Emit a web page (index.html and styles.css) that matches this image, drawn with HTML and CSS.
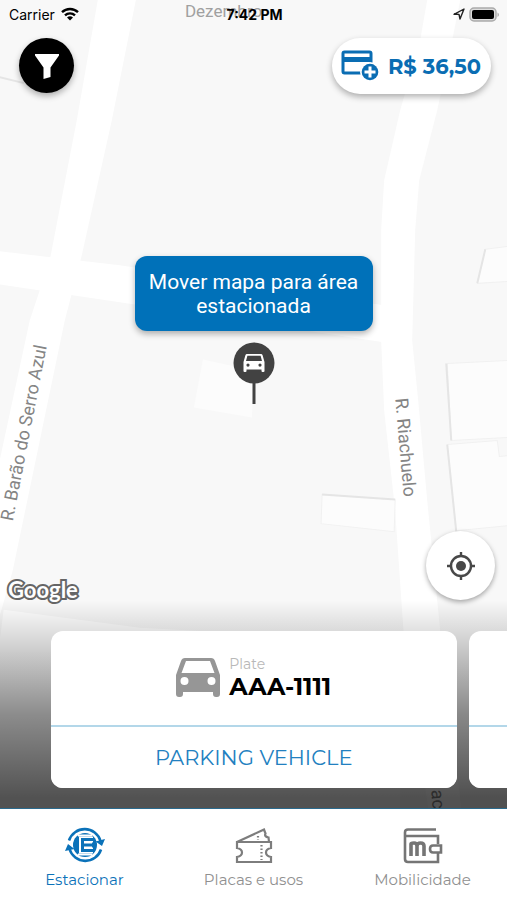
FILE: index.html
```
<!DOCTYPE html>
<html lang="pt-BR">
<head>
  <meta charset="UTF-8">
  <meta name="viewport" content="width=device-width, initial-scale=1.0">
  <title>Estacionar</title>
  <link rel="stylesheet" href="styles.css">
</head>
<body>
  <div class="app">
    <main class="screen">
      <svg class="map" viewBox="0 0 507 807" preserveAspectRatio="xMidYMid slice">
        <rect width="507" height="807" fill="#f8f8f8"/>
        <!-- roads -->
        <g fill="#fff">
          <path d="M98 0h38L112 120 82 255l-17 65-52 250-13 45V460L30 320l20-60 27-140z"/>
          <path d="M0 251l120 14 265 40v37l-265-40L0 284z"/>
          <path d="M427 0h33l-8 40-15 70-18 70-4 50-3 110 6 60 9 100 10 100 4 40 20 167h-33l-24-167-9-130-11-100-3-70v-110l3-50 16-70 20-70z"/>
          <path d="M4 609l136 18 260 14v166H0V640z"/>
        </g>
        <!-- buildings -->
        <g fill="#fcfcfc" stroke="#f1f1f1">
          <path d="M485 249l23-3v35l-31 2z"/>
          <path d="M508 360l-61 3 4 77 57-3z"/>
          <path d="M447 444l50-4 2 16 9-1v70l-52 5z"/>
          <path d="M322 494l73 5-1 32-73-8z"/>
        </g>
        <path d="M203 359l50 11-1 47-58-10z" fill="#fcfcfc"/>
        <g fill="none" stroke="#e5e5e5" stroke-width="2">
          <path d="M0 77l24 6M446 363l5 77M447 444l9 87M322 494l73 5M485 249l-8 34"/>
        </g>
        <g class="map-labels">
          <text class="faded" x="185" y="17">Dezembro</text>
          <text transform="translate(13 521) rotate(-79)">R. Barão do Serro Azul</text>
          <text transform="translate(395 398) rotate(85)">R. Riachuelo</text>
          <text transform="translate(431 789) rotate(86)">achuelo</text>
        </g>
      </svg>

      <div class="status-bar">
        <div class="carrier">
          <span>Carrier</span>
          <svg width="18" height="14" viewBox="0 0 18 14">
            <g fill="none" stroke="#000" stroke-width="2.4">
              <path d="M1 5.2a11.6 11.6 0 0 1 16 0M4 8.4a7.2 7.2 0 0 1 10 0"/>
            </g>
            <path d="M6 10.6a4.4 4.4 0 0 1 6 0l-3 3z"/>
          </svg>
        </div>
        <span class="time">7:42 PM</span>
        <div class="status-icons">
          <svg width="12" height="12" viewBox="0 0 12 12">
            <path d="M1 6.3L11 1 7 11 6 6.4z" fill="none" stroke="#222" stroke-width="1.4" stroke-linejoin="round"/>
          </svg>
          <svg width="31" height="15" viewBox="0 0 31 15">
            <rect x="1" y="1" width="26" height="13" rx="4" fill="#ddd" stroke="#aaa" stroke-width="1.5"/>
            <rect x="3" y="3" width="22" height="9" rx="2"/>
            <path d="M28.5 5.5V10q1.5-.8 1.5-2.2t-1.5-2.3z" fill="#aaa"/>
          </svg>
        </div>
      </div>

      <div class="top-bar">
        <button class="filter" aria-label="Filtrar">
          <svg width="26" height="26" viewBox="0 0 26 26">
            <path d="M1 1h24v1.5l-8.5 12V24l-7 2V14.5L1 2.5z" fill="#fff"/>
          </svg>
        </button>
        <button class="balance">
          <svg width="38" height="32" viewBox="0 0 38 32">
            <rect x="2" y="2" width="28" height="21" rx="1.5" fill="none" stroke="#0a6db3" stroke-width="3"/>
            <path d="M2 7h28v5H2z" fill="#0a6db3"/>
            <circle cx="29" cy="22" r="10" fill="#fff"/>
            <circle cx="29" cy="22" r="8.3" fill="#0a6db3"/>
            <path d="M29 16.5v11M23.5 22h11" stroke="#fff" stroke-width="3"/>
          </svg>
          <span>R$ 36,50</span>
        </button>
      </div>

      <div class="marker">
        <button class="callout">Mover mapa para área estacionada</button>
        <svg width="42" height="62" viewBox="0 0 42 62">
          <path d="M21 38v24" stroke="#424242" stroke-width="3"/>
          <circle cx="21" cy="21" r="20.5" fill="#424242"/>
          <path d="M14 12h14q1.2 0 1.6 1.2L31.5 20v9q0 1-1 1h-1q-1 0-1-1v-1.5h-15V29q0 1-1 1h-1q-1 0-1-1v-9l1.9-6.8Q12.8 12 14 12zm.4 1.8L13 19h16l-1.4-5.2zM15 21.5a1.6 1.6 0 1 0 0 3.2 1.6 1.6 0 0 0 0-3.2zm12 0a1.6 1.6 0 1 0 0 3.2 1.6 1.6 0 0 0 0-3.2z" fill="#fff"/>
        </svg>
      </div>

      <div class="map-tools">
        <span class="google">Google</span>
        <button class="locate" aria-label="Minha localização">
          <svg width="28" height="28" viewBox="0 0 28 28">
            <circle cx="14" cy="14" r="10" fill="none" stroke="#484848" stroke-width="2.4"/>
            <circle cx="14" cy="14" r="5" fill="#484848"/>
            <path d="M14 0v5M14 23v5M0 14h5M23 14h5" stroke="#484848" stroke-width="2.4"/>
          </svg>
        </button>
      </div>

      <div class="cards">
        <article class="card">
          <div class="vehicle">
            <svg width="44" height="40" viewBox="0 0 44 40">
              <path d="M9 0h26q3 0 4 3l5 14v19q0 3-3 3h-1q-3 0-3-3v-2H7v2q0 3-3 3H3q-3 0-3-3V17L5 3q1-3 4-3zm1 3L5.5 15h33L34 3zM8.5 19a4 4 0 1 0 0 8 4 4 0 0 0 0-8zm27 0a4 4 0 1 0 0 8 4 4 0 0 0 0-8z" fill="#969696"/>
            </svg>
            <div>
              <p class="plate-label">Plate</p>
              <p class="plate">AAA-1111</p>
            </div>
          </div>
          <button class="park">PARKING VEHICLE</button>
        </article>
        <article class="card">
          <div class="vehicle"></div>
          <div class="park"></div>
        </article>
      </div>
    </main>

    <nav class="tabs">
      <a class="tab active" href="#estacionar">
        <svg width="40" height="38" viewBox="0 0 40 38">
          <g fill="none" stroke="currentColor" stroke-width="2.6">
            <path d="M4 14.5A16.5 16.5 0 0 1 35.5 15"/>
            <path d="M36 23.5A16.5 16.5 0 0 1 4.5 23"/>
          </g>
          <path d="M30.5 15.5L40 13l-3 7zM0 25l3-7 6.5 5z" fill="currentColor"/>
          <circle cx="20" cy="19" r="12" fill="currentColor"/>
          <g fill="none">
            <path d="M13 9.5h14M13 28.5h14" stroke="#fff" stroke-width="2"/>
            <path d="M28 13.5H17v11h11M17 19h10" stroke="#fff" stroke-width="6"/>
            <path d="M29 13.5H17.500v11H29M17.500 19H29" stroke="currentColor" stroke-width="3"/>
          </g>
        </svg>
        <span>Estacionar</span>
      </a>
      <a class="tab" href="#placas">
        <svg width="40" height="38" viewBox="0 0 40 38">
          <g fill="none" stroke="#7d7d7d" stroke-width="2.2">
            <path d="M3 16h34v6q-5 1-5 4.5t5 4.5v5H3v-5q5-1 5-4.5T3 22z"/>
            <path d="M3 16L30 3.5l1.5 4q-1.5 3 3 4L35 16"/>
            <path d="M27.5 19v15M24 10v4" stroke-dasharray="1.5 2"/>
          </g>
        </svg>
        <span>Placas e usos</span>
      </a>
      <a class="tab" href="#mobilicidade">
        <svg width="40" height="38" viewBox="0 0 40 38">
          <g fill="none" stroke="#757575" stroke-width="2.6">
            <path d="M33 3.5H5q-3 0-3 3V33q0 3 3 3h30v-9M35 18v-8H3"/>
            <path d="M38 19.5h-8q-3 0-3 3.5t3 3.5h8z"/>
          </g>
          <path d="M8 30V18q0-1 3-1t3 3v10M14 20q0-3 3.5-3t3.5 3v10" fill="none" stroke="#757575" stroke-width="3.6"/>
        </svg>
        <span>Mobilicidade</span>
      </a>
    </nav>
  </div>
</body>
</html>
```
FILE: styles.css
```
* {
  box-sizing: border-box;
  margin: 0;
  padding: 0;
}
body {
  font-family: Montserrat, Inter, sans-serif;
  color: #000;
}
button {
  border: 0;
  font: inherit;
  cursor: pointer;
}
svg {
  display: block;
  flex-shrink: 0;
}
.app {
  display: flex;
  flex-direction: column;
  min-height: 100vh;
}
.screen {
  position: relative;
  display: flex;
  flex-direction: column;
  flex: 1;
  overflow: hidden;
}

/* map behind everything */
.map {
  position: absolute;
  width: 100%;
  height: 100%;
  z-index: -1;
}
.map-labels {
  font-family: Roboto, sans-serif;
  font-size: 18px;
  fill: #858585;
}
.map-labels .faded {
  font-size: 17px;
  fill: #a0a0a0;
}

.status-bar {
  display: grid;
  grid-template-columns: 1fr auto 1fr;
  align-items: center;
  height: 28px;
  padding: 0 7px 0 9px;
  font-family: Inter, sans-serif;
  font-size: 14px;
}
.carrier, .status-icons {
  display: flex;
  align-items: center;
  gap: 6px;
}
.status-icons {
  justify-content: flex-end;
  gap: 4px;
}
.time {
  font-weight: 700;
}

.top-bar {
  display: flex;
  justify-content: space-between;
  padding: 10px 16px 0 19px;
}
.filter, .locate {
  display: flex;
  align-items: center;
  justify-content: center;
  border-radius: 50%;
}
.filter {
  width: 55px;
  height: 55px;
  background: #000;
  box-shadow: 0 3px 6px rgba(0, 0, 0, .3);
}
.balance {
  display: flex;
  align-items: center;
  gap: 9px;
  height: 56px;
  padding: 0 10px 0 9px;
  border-radius: 28px;
  background: #fff;
  color: #0a6db3;
  font-size: 21px;
  font-weight: 700;
  white-space: nowrap;
  box-shadow: 0 3px 6px rgba(0, 0, 0, .3);
}

/* the tip of the pin stays on the centre of the map */
.marker {
  position: absolute;
  left: 50%;
  bottom: 50%;
  transform: translateX(-50%);
  display: flex;
  flex-direction: column;
  align-items: center;
  gap: 11px;
}
.callout {
  width: 238px;
  padding: 14px 10px 13px;
  border-radius: 12px;
  background: #0071b9;
  color: #fff;
  font-family: Roboto, sans-serif;
  font-size: 21px;
  line-height: 24px;
  box-shadow: 0 3px 6px rgba(0, 0, 0, .3);
}

.map-tools {
  display: flex;
  align-items: flex-end;
  justify-content: space-between;
  margin-top: auto;
  padding: 0 12px 0 8px;
}
.google {
  font-family: Lato, sans-serif;
  font-size: 22px;
  font-weight: 700;
  line-height: 20px;
  color: #fff;
  -webkit-text-stroke: 4px #666;
  paint-order: stroke fill;
}
.locate {
  width: 69px;
  height: 69px;
  background: #fff;
  box-shadow: 0 2px 5px rgba(0, 0, 0, .35);
}

.cards {
  display: flex;
  gap: 12px;
  padding: 31px 0 20px 10%;
  background: linear-gradient(transparent, rgba(0, 0, 0, .12) 15%, rgba(0, 0, 0, .45) 55%, rgba(0, 0, 0, .68) 95%);
}
.card {
  flex: 0 0 89%;
  border-radius: 12px;
  background: #fff;
  overflow: hidden;
}
.vehicle {
  display: flex;
  align-items: center;
  justify-content: center;
  gap: 9px;
  height: 94px;
}
.plate-label {
  font-size: 14px;
  line-height: 18px;
  color: #b8b8b8;
}
.plate {
  font-size: 24px;
  font-weight: 700;
  line-height: 28px;
}
.park {
  display: block;
  width: 100%;
  height: 63px;
  border-top: 2px solid #b3d7e9;
  background: #fff;
  color: #2280c0;
  font-size: 21px;
}

.tabs {
  display: flex;
  border-top: 1px solid #2b6a8d;
  background: #fff;
}
.tab {
  display: flex;
  flex: 1;
  flex-direction: column;
  align-items: center;
  gap: 6px;
  padding: 17px 0 10px;
  color: #909090;
  font-size: 15px;
  line-height: 20px;
  text-decoration: none;
}
.tab.active {
  color: #0b72b9;
}
```
